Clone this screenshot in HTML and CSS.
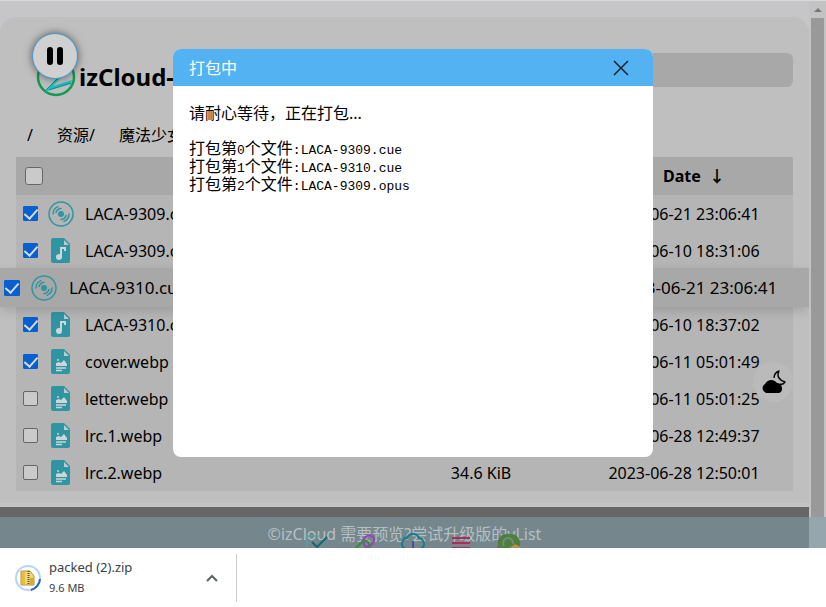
FILE: index.html
```html
<!DOCTYPE html>
<html lang="zh-CN">
<head>
<meta charset="utf-8">
<title>izCloud</title>
<link rel="stylesheet" href="styles.css">
</head>
<body>
<svg class="sprite" aria-hidden="true">
  <symbol id="disc" viewBox="0 0 26 26">
    <g fill="none" stroke="#2f95a3" stroke-width="1.5" stroke-linecap="round">
      <circle cx="13" cy="13" r="12"/>
      <path d="M5 13a8 8 0 0 1 5-7.400M8 11.500a5.500 5.500 0 0 1 5-4M21 13a8 8 0 0 1-5 7.400M18 14.500a5.500 5.500 0 0 1-5 4"/>
    </g>
    <circle cx="13" cy="13" r="3" fill="#2f95a3"/>
  </symbol>
  <symbol id="music" viewBox="0 0 20 25">
    <path fill="#2f95a3" d="M2 0h11l6 6v17a2 2 0 0 1-2 2H2a2 2 0 0 1-2-2V2a2 2 0 0 1 2-2z"/>
    <path fill="#bccccd" d="M13 2v5h5z"/>
    <path fill="none" stroke="#cdd5d6" stroke-width="2" d="M10 19V10h4v3"/>
    <circle cx="8" cy="19" r="3" fill="#cdd5d6"/>
  </symbol>
  <symbol id="image" viewBox="0 0 20 25">
    <path fill="#2f95a3" d="M2 0h11l6 6v17a2 2 0 0 1-2 2H2a2 2 0 0 1-2-2V2a2 2 0 0 1 2-2z"/>
    <path fill="#bccccd" d="M13 2v5h5z"/>
    <path fill="#cdd5d6" d="M5 17v-3l3-1 2 1 3-3 3 4v2z"/>
    <circle cx="7" cy="11" r="1" fill="#cdd5d6"/>
    <path stroke="#cdd5d6" stroke-width="1.300" d="M5 19h10M5 21.500h6"/>
  </symbol>
</svg>

<div class="browser">
  <div class="viewport">
    <main class="content">
      <section class="panel">
        <header class="top">
          <a class="brand" href="#">
            <svg class="logo" viewBox="0 0 40 40" aria-hidden="true">
              <circle cx="20" cy="20" r="18" fill="#b9c0be" stroke="#199755" stroke-width="2.500"/>
              <path fill="#1bbfc0" d="M9 34L23 19l4-1-10 11 19-6-1 4-22 6-2 2z"/>
              <path fill="none" stroke="#168c8c" d="M9 34l15-15M13 33l22-7"/>
            </svg>
            <span class="brand-name">izCloud-</span>
          </a>
          <input class="search" type="search" aria-label="搜索">
        </header>
        <nav class="crumbs"><a href="#">/</a><a href="#">资源/</a><a href="#">魔法少女</a></nav>
        <table class="files">
          <thead>
            <tr>
              <th class="pick"><input class="check large" type="checkbox" aria-label="全选"></th>
              <th></th>
              <th></th>
              <th class="date">Date&nbsp; ↓</th>
            </tr>
          </thead>
          <tbody>
            <tr><td class="pick"><input class="check" type="checkbox" checked aria-label="LACA-9309.cue"><svg class="icon disc"><use href="#disc"/></svg></td><td>LACA-9309.cue</td><td class="size"></td><td class="date">2023-06-21 23:06:41</td></tr>
            <tr><td class="pick"><input class="check" type="checkbox" checked aria-label="LACA-9309.opus"><svg class="icon"><use href="#music"/></svg></td><td>LACA-9309.opus</td><td class="size"></td><td class="date">2023-06-10 18:31:06</td></tr>
            <tr class="raised"><td class="pick"><input class="check" type="checkbox" checked aria-label="LACA-9310.cue"><svg class="icon disc"><use href="#disc"/></svg></td><td>LACA-9310.cue</td><td class="size"></td><td class="date">2023-06-21 23:06:41</td></tr>
            <tr><td class="pick"><input class="check" type="checkbox" checked aria-label="LACA-9310.opus"><svg class="icon"><use href="#music"/></svg></td><td>LACA-9310.opus</td><td class="size"></td><td class="date">2023-06-10 18:37:02</td></tr>
            <tr><td class="pick"><input class="check" type="checkbox" checked aria-label="cover.webp"><svg class="icon"><use href="#image"/></svg></td><td>cover.webp</td><td class="size"></td><td class="date">2023-06-11 05:01:49</td></tr>
            <tr><td class="pick"><input class="check" type="checkbox" aria-label="letter.webp"><svg class="icon"><use href="#image"/></svg></td><td>letter.webp</td><td class="size"></td><td class="date">2023-06-11 05:01:25</td></tr>
            <tr><td class="pick"><input class="check" type="checkbox" aria-label="lrc.1.webp"><svg class="icon"><use href="#image"/></svg></td><td>lrc.1.webp</td><td class="size"></td><td class="date">2023-06-28 12:49:37</td></tr>
            <tr><td class="pick"><input class="check" type="checkbox" aria-label="lrc.2.webp"><svg class="icon"><use href="#image"/></svg></td><td>lrc.2.webp</td><td class="size">34.6 KiB</td><td class="date">2023-06-28 12:50:01</td></tr>
          </tbody>
        </table>
      </section>
      <footer class="footer">©izCloud 需要预览?尝试升级版的vList</footer>
      <div class="dock" aria-hidden="true">
        <svg viewBox="0 0 24 24"><path fill="none" stroke="#55a0a0" stroke-width="1.500" d="M14 4H2v18h18v-8"/><path fill="none" stroke="#0f6b72" stroke-width="2" d="M7 10l5 5L22 5"/></svg>
        <svg viewBox="0 0 24 24"><g fill="none" stroke-width="2"><path stroke="#9a3fbe" d="M9 9l4-4a4.500 4.500 0 0 1 7 6l-4 4a4 4 0 0 1-5-5"/><path stroke="#3d8a3a" d="M14 9a4 4 0 0 0-5 1l-6 6a4 4 0 0 0 6 6l5-6a4 4 0 0 0 0-7"/></g></svg>
        <svg viewBox="0 0 24 24"><path fill="none" stroke="#15808c" stroke-width="2" d="M6 17a5 5 0 0 1-4-8 3 3 0 0 1 4-3 6.500 6.500 0 0 1 12 0 4 4 0 0 1 4 3 5 5 0 0 1-4 8"/><path stroke="#4053a0" stroke-width="2" d="M12 9v13"/></svg>
        <svg viewBox="0 0 24 24"><path stroke="#b02a5b" stroke-width="2" d="M3 6h18M3 11h18M3 16h18M3 21h18"/></svg>
        <svg viewBox="0 0 24 24"><path fill="#4f7f3c" d="M1 13a9 9 0 0 1 10-11 10 10 0 0 1 12 12l-4 3-6-3-2 8H4a6 6 0 0 1-3-9z"/><path fill="none" stroke="#758a7c" stroke-width="2" d="M7 14a5 5 0 1 1 9-2"/><path fill="#c48a45" d="M14 15l4-3 5 3-2 8h-5z"/></svg>
      </div>
      <button class="player" type="button" aria-label="暂停">
        <svg viewBox="0 0 20 20"><path stroke="#000" stroke-width="6" stroke-linecap="round" d="M5 4v12M15 4v12"/></svg>
      </button>
      <button class="theme" type="button" aria-label="深色模式">
        <svg viewBox="0 0 26 26"><path d="M6 24a5 5 0 0 1-1-9 7 7 0 0 1 12-1 5 5 0 0 1 5 5 4 4 0 0 1-4 5z"/><path fill="none" stroke="#000" stroke-width="1.400" stroke-linejoin="round" d="M14 9q0-5 5-7-2 4 0 7t6 4q-2 3-5 2"/></svg>
      </button>
    </main>
    <div class="scrollbar" aria-hidden="true"><i class="arrow"></i><i class="thumb"></i><i class="scroll-end"></i></div>
    <dialog class="packing" open aria-labelledby="packing-title">
      <header class="packing-head">
        <h2 id="packing-title">打包中</h2>
        <button class="close" type="button" aria-label="关闭"><svg viewBox="0 0 16 16"><path stroke="#10202c" stroke-width="1.500" d="M1 1l14 14M15 1L1 15"/></svg></button>
      </header>
      <div class="packing-body">
        <p>请耐心等待，正在打包...</p>
        <ul>
          <li>打包第<code>0</code>个文件<code>:LACA-9309.cue</code></li>
          <li>打包第<code>1</code>个文件<code>:LACA-9310.cue</code></li>
          <li>打包第<code>2</code>个文件<code>:LACA-9309.opus</code></li>
        </ul>
      </div>
    </dialog>
  </div>

  <aside class="downloads">
    <div class="download">
      <svg class="zip" viewBox="0 0 28 28" aria-hidden="true">
        <circle cx="14" cy="14" r="12" fill="#fff" stroke="#b9d3f7" stroke-width="2"/>
        <path fill="none" stroke="#1a66d8" stroke-width="2" d="M26 15a12 12 0 0 1-9 11"/>
        <path fill="#f3d66b" stroke="#b8922e" d="M7 7h9l4 5v9H7z"/>
        <path fill="#e7bd45" d="M8 8h3v12H8z"/>
        <path stroke="#555" stroke-width="2" stroke-dasharray="1 1" d="M14.500 7v14"/>
        <path fill="#d6aa35" d="M16 14h4v7h-4z"/>
      </svg>
      <div class="file"><span class="file-name">packed (2).zip</span><span class="file-size">9.6 MB</span></div>
      <button class="more" type="button" aria-label="更多"><svg viewBox="0 0 12 12"><path fill="none" stroke="#5f6368" stroke-width="2" d="M1 9l5-5 5 5"/></svg></button>
    </div>
  </aside>
</div>
</body>
</html>
```
FILE: styles.css
```css
* { box-sizing: border-box; }

body {
  margin: 0;
  font: 16px/20px "Noto Sans", "Noto Sans CJK SC", sans-serif;
  color: #000;
  background: #fff;
}

a { color: inherit; text-decoration: none; }
button { padding: 0; border: 0; background: none; display: grid; place-items: center; }
.sprite { position: absolute; width: 0; height: 0; }

.browser { height: 100vh; display: flex; flex-direction: column; }
.viewport { flex: 1; min-height: 0; display: flex; position: relative; overflow: hidden; }

.content {
  flex: 1;
  display: flex;
  flex-direction: column;
  position: relative;
  overflow: hidden;
  padding-top: 16px;
  border-top: 1px solid #d8d8d8;
  background: #c6c6c8;
}

.panel {
  flex: 1;
  padding: 36px 16px 0;
  border-bottom: 4px solid #c4c4c4;
  border-radius: 16px 16px 0 0;
  background: #bfbfbf;
}

.top { display: flex; align-items: flex-start; justify-content: space-between; }
.brand { display: flex; align-items: center; padding: 4px 0 0 20px; }
.logo { width: 40px; height: 40px; }
.brand-name { padding-left: 3px; font-size: 24px; font-weight: 700; line-height: 32px; }
.search { width: 400px; height: 34px; border: 0; border-radius: 6px; background: #a8a8a8; }

.crumbs { display: flex; gap: 24px; padding: 28px 11px 12px; line-height: 20px; }

.files { display: block; background: #b5b5b5; }
.files thead, .files tbody { display: block; }
.files tr {
  display: grid;
  grid-template-columns: 69px 1fr 188px 218px;
  align-items: center;
  height: 37px;
}
.files thead tr { height: 38px; background: #a8a8a8; }
.files th, .files td { padding: 0; text-align: left; white-space: nowrap; }
.files .size, .files .date { text-align: center; }
.files th.date { padding-left: 20px; }
.files .pick { display: flex; align-items: center; gap: 13px; padding-left: 7px; }
.files th.pick { padding-left: 9px; }

.files .raised {
  grid-template-columns: 69px 1fr 188px 224px;
  position: relative;
  height: 39px;
  margin: -1px -16px;
  font-size: 17px;
  background: #a8a8a8;
  box-shadow: 0 4px 10px #0002;
}
.raised .pick { padding-left: 4px; }
.raised .check { width: 16px; height: 16px; }

.check {
  appearance: none;
  flex: none;
  display: grid;
  place-items: center;
  width: 15px;
  height: 15px;
  margin: 0;
  border: 1px solid #666;
  border-radius: 2px;
  background: #cacaca;
}
.check.large { width: 18px; height: 18px; border-radius: 3px; }
.check:checked { border-color: #075fd0; border-radius: 1px; background: #075fd0; }
.check:checked::after {
  content: "";
  width: 6px;
  height: 11px;
  border: solid #d5dce5;
  border-width: 0 2px 2px 0;
  transform: translateY(-1px) rotate(42deg);
}
.icon { flex: none; width: 20px; height: 25px; }
.pick .disc { width: 26px; height: 26px; margin: 0 -3px; }
.raised .disc { margin-left: -2px; }

.footer {
  height: 41px;
  padding-top: 7px;
  border-top: 10px solid #666;
  text-align: center;
  color: #b4c0c5;
  background: #75868c;
}

.dock {
  position: absolute;
  bottom: -8px;
  left: 0;
  right: 0;
  display: flex;
  justify-content: center;
  gap: 24px;
  padding-left: 17px;
}
.dock svg { width: 24px; height: 24px; }

.player {
  position: absolute;
  top: 32px;
  left: 32px;
  width: 46px;
  height: 46px;
  border: 1px solid #4296cf;
  border-radius: 50%;
  background: #d0d0d0;
  box-shadow: 0 0 8px #0008;
}
.player svg { width: 20px; height: 20px; }

.theme {
  position: absolute;
  right: 16px;
  bottom: 146px;
  width: 40px;
  height: 40px;
  border-radius: 50%;
  background: #bababa;
}
.theme svg { width: 26px; height: 26px; }

.scrollbar {
  width: 17px;
  display: flex;
  flex-direction: column;
  border-top: 1px solid #d8d8d8;
  background: #c3c3c3;
}
.arrow {
  width: 0;
  margin: 7px 5px 6px;
  border: solid transparent;
  border-width: 0 4px 4px;
  border-bottom-color: #777;
}
.thumb { flex: 1; margin: 0 2px; background: #999; }
.scroll-end { height: 31px; background: #95a6ae; }

.packing {
  position: absolute;
  top: 49px;
  width: 480px;
  max-width: 90%;
  min-height: 408px;
  margin: 0 auto;
  padding: 0;
  border: 0;
  border-radius: 8px;
  overflow: hidden;
  color: #000;
  background: #fff;
}
.packing-head {
  display: flex;
  align-items: center;
  justify-content: space-between;
  height: 37px;
  padding: 0 24px 0 16px;
  color: #fff;
  background: #52b2f2;
}
.packing h2 { margin: 0; font-size: 16px; font-weight: 400; }
.close, .close svg { width: 16px; height: 16px; }
.packing-body { padding: 17px 16px; }
.packing p { margin: 0 0 16px; }
.packing ul { margin: 0; padding: 0; list-style: none; line-height: 18px; }
.packing li { height: 18px; }
.packing code { font: 13px/18px "Liberation Mono", monospace; }

.downloads { height: 59px; padding: 6px 0 5px; background: #fff; }
.download {
  display: flex;
  align-items: center;
  width: 237px;
  height: 48px;
  padding: 0 18px 0 14px;
  border-right: 1px solid #ccc;
}
.zip { width: 28px; height: 28px; }
.file { flex: 1; display: flex; flex-direction: column; padding: 0 0 2px 7px; color: #3c4043; }
.file-name { font-size: 13px; line-height: 22px; }
.file-size { font-size: 11px; line-height: 20px; }
.more, .more svg { width: 12px; height: 12px; }
```
